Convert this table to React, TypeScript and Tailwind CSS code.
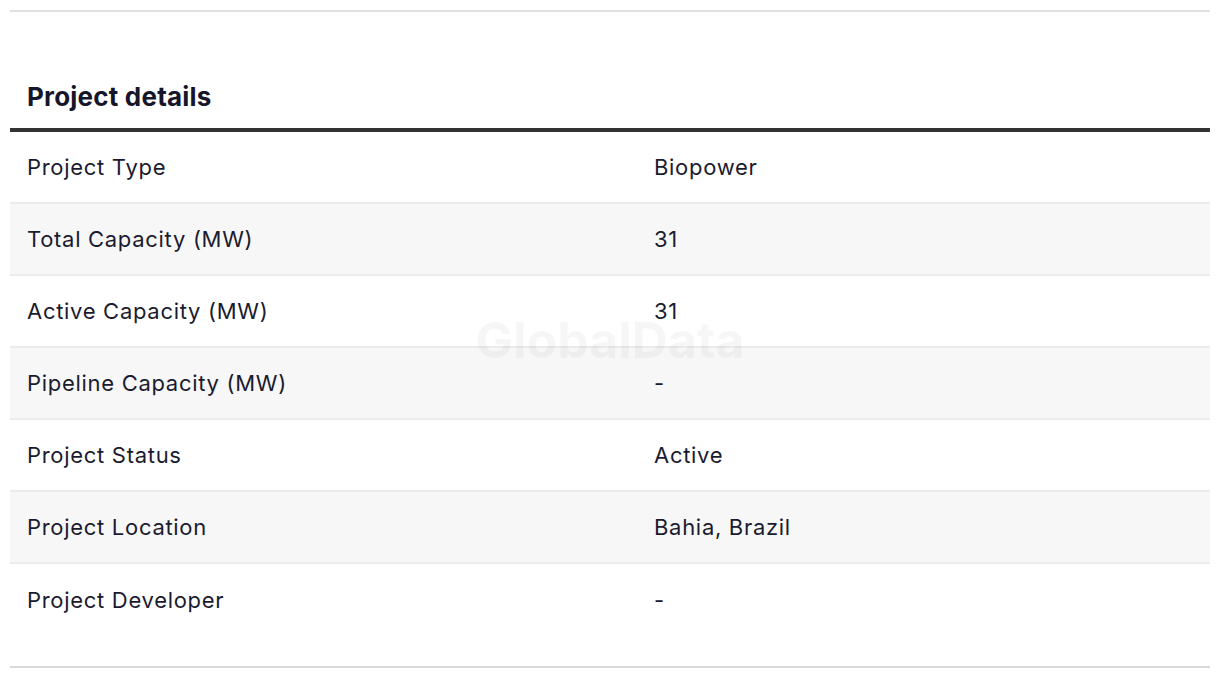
import React from "react";

const rows: [string, string][] = [
  ["Project Type", "Biopower"],
  ["Total Capacity (MW)", "31"],
  ["Active Capacity (MW)", "31"],
  ["Pipeline Capacity (MW)", "-"],
  ["Project Status", "Active"],
  ["Project Location", "Bahia, Brazil"],
  ["Project Developer", "-"],
];

export default function App() {
  return (
    <div
      className="relative w-[1220px] h-[678px] bg-white px-[10px] pt-[10px] text-[#1b1b2f]"
      style={{ fontFamily: "Inter, 'Noto Sans', sans-serif" }}
    >
      <div className="border-t-2 border-[#e0e0e0]" />
      <div className="pt-[68px] pb-[14px] pl-[17px]">
        <h2 className="text-[26px] font-bold leading-[34px] tracking-[0.2px] text-[#16162b]">Project details</h2>
      </div>
      <div className="border-t-4 border-[#333333]">
        {rows.map(([k, v], i) => (
          <div
            key={k}
            className={
              "grid grid-cols-[627px_1fr] items-center h-[72px] text-[22px] tracking-[0.7px] " +
              (i % 2 === 1 ? "bg-[#f7f7f7] " : "bg-white ") +
              (i < rows.length - 1 ? "border-b-2 border-[#ebebeb]" : "")
            }
          >
            <div className="pl-[17px]">{k}</div>
            <div className="pl-[17px]">{v}</div>
          </div>
        ))}
      </div>
      <div className="mt-[30px] border-t-2 border-[#d9d9d9]" />
      <div className="pointer-events-none absolute left-0 top-[312px] w-full text-center text-[50px] font-bold leading-[56px] text-black/[0.035]">
        GlobalData
      </div>
    </div>
  );
}
